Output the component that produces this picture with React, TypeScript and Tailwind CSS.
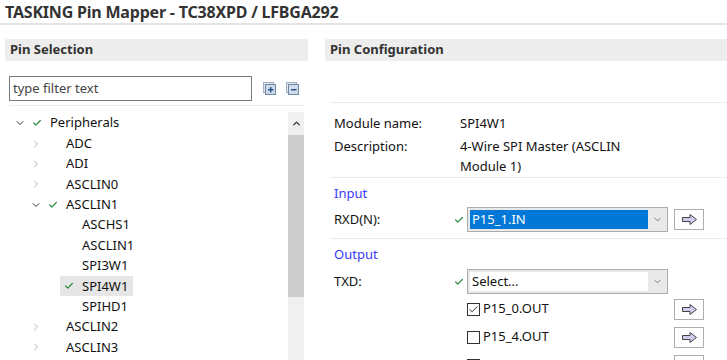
import React from 'react';
import { Check, ChevronDown, ChevronRight, ChevronUp } from 'lucide-react';

interface TreeNode {
    label: string;
    level: number;
    expander?: 'open' | 'closed';
    checked?: boolean;
    selected?: boolean;
}

const tree: TreeNode[] = [
    { label: 'Peripherals', level: 0, expander: 'open', checked: true },
    { label: 'ADC', level: 1, expander: 'closed' },
    { label: 'ADI', level: 1, expander: 'closed' },
    { label: 'ASCLIN0', level: 1, expander: 'closed' },
    { label: 'ASCLIN1', level: 1, expander: 'open', checked: true },
    { label: 'ASCHS1', level: 2 },
    { label: 'ASCLIN1', level: 2 },
    { label: 'SPI3W1', level: 2 },
    { label: 'SPI4W1', level: 2, checked: true, selected: true },
    { label: 'SPIHD1', level: 2 },
    { label: 'ASCLIN2', level: 1, expander: 'closed' },
    { label: 'ASCLIN3', level: 1, expander: 'closed' },
];

// little block arrow used on the "show pin" buttons
const ArrowIcon = () => (
    <svg width="17" height="13" viewBox="0 0 17 13">
        <path d="M1.5 4.5 H9 V1.5 L15.5 6.5 L9 11.5 V8.5 H1.5 Z" fill="#cfcdf0" stroke="#444" strokeWidth="1" strokeLinejoin="round" />
    </svg>
);

const ArrowButton = () => (
    <div className="w-[30px] h-[21px] border border-[#adadad] bg-white flex items-center justify-center">
        <ArrowIcon />
    </div>
);

const TreeToggleIcon = ({ plus }: { plus: boolean }) => (
    <svg width="13" height="13" viewBox="0 0 13 13">
        <rect x="0.5" y="0.5" width="10" height="10" fill="#dfe6ee" stroke="#9fb0c4" />
        <rect x="2.5" y="2.5" width="10" height="10" fill="#cfdbe8" stroke="#6d87a6" />
        <rect x="5" y="7" width="5.5" height="1.4" fill="#22508a" />
        {plus && <rect x="7" y="5" width="1.4" height="5.5" fill="#22508a" />}
    </svg>
);

const GreenCheck = () => <Check size={10} strokeWidth={3} className="text-[#2f8f3f]" />;

const Combo = ({ value, highlighted }: { value: string; highlighted?: boolean }) => (
    <div className="w-[201px] h-[25px] border border-[#adadad] bg-[#e9e9e9] flex">
        <div className={`flex-1 m-[2px] mr-0 flex items-center px-[2px] ${highlighted ? 'bg-[#0078d7] text-white' : 'bg-white text-[#111]'}`}>
            {value}
        </div>
        <div className="w-[19px] flex items-center justify-center">
            <ChevronDown size={11} strokeWidth={1.5} className="text-[#555]" />
        </div>
    </div>
);

const App: React.FC = () => {
    return (
        <div className="w-[727px] h-[360px] overflow-hidden bg-white text-[13px] text-[#111]" style={{ fontFamily: '"Noto Sans", "Open Sans", sans-serif' }}>
            <div className="h-[23px] px-[5px] flex items-center">
                <h1 className="text-[16px] font-bold text-[#333] leading-none tracking-[-0.2px]">TASKING Pin Mapper - TC38XPD / LFBGA292</h1>
            </div>
            <div className="h-[2px] bg-[#e4e4e4]" />

            <div className="flex pt-[14px]">
                {/* left side: pin selection */}
                <section className="w-[303px] ml-[5px]">
                    <div className="h-[22px] bg-[#ededed] rounded-[2px] flex items-center px-[5px] font-bold text-[#333]">Pin Selection</div>
                    <div className="mt-[15px] ml-[4px] flex items-center">
                        <div className="w-[243px] h-[25px] border border-[#7a7a7a] flex items-center px-[3px] text-[#444]">type filter text</div>
                        <div className="ml-[11px]"><TreeToggleIcon plus /></div>
                        <div className="ml-[10px]"><TreeToggleIcon plus={false} /></div>
                    </div>
                    <div className="mt-[4px] ml-[4px] w-[295px] h-px bg-[#ececec]" />
                    <div className="flex mt-[6px]">
                        <div className="flex-1 pt-px">
                            {tree.map((node, i) => (
                                <div key={i} className="h-[20.4px] flex items-center" style={{ paddingLeft: 7 + node.level * 16 }}>
                                    <div className="w-[16px] flex items-center justify-center">
                                        {node.expander === 'open' && <ChevronDown size={12} strokeWidth={2} className="text-[#333]" />}
                                        {node.expander === 'closed' && <ChevronRight size={12} strokeWidth={1.5} className="text-[#999]" />}
                                    </div>
                                    <div className={`flex items-center h-[20px] ${node.selected ? 'bg-[#e6e6e6]' : ''}`}>
                                        <div className="w-[18px] flex items-center justify-center">
                                            {node.checked && <GreenCheck />}
                                        </div>
                                        <span className="pl-[4px] pr-[5px]">{node.label}</span>
                                    </div>
                                </div>
                            ))}
                        </div>
                        <div className="w-[16px] mr-[4px] bg-[#f0f0f0] flex flex-col h-[250px]">
                            <div className="h-[23px] flex items-center justify-center">
                                <ChevronUp size={11} strokeWidth={3} className="text-[#333]" />
                            </div>
                            <div className="h-[162px] bg-[#cdcdcd]" />
                        </div>
                    </div>
                </section>

                {/* right side: pin configuration */}
                <section className="flex-1 ml-[17px]">
                    <div className="h-[22px] bg-[#ededed] rounded-l-[2px] flex items-center px-[5px] font-bold text-[#333]">Pin Configuration</div>
                    <div className="mt-[41px] ml-[5px] h-px bg-[#ececec]" />
                    <div className="pl-[9px] pt-[11px]">
                        <div className="flex h-[20px] items-center">
                            <span className="w-[126px]">Module name:</span>
                            <span>SPI4W1</span>
                        </div>
                        <div className="flex mt-[2px] leading-[20px]">
                            <span className="w-[126px]">Description:</span>
                            <span>4-Wire SPI Master (ASCLIN<br />Module 1)</span>
                        </div>
                    </div>
                    <div className="mt-[1px] ml-[5px] h-px bg-[#ececec]" />
                    <div className="pl-[9px] pt-[6px]">
                        <div className="h-[20px] flex items-center text-[#3a3aff]">Input</div>
                        <div className="flex items-center mt-[3px]">
                            <span className="w-[117px]">RXD(N):</span>
                            <div className="w-[16px] flex items-center justify-center"><GreenCheck /></div>
                            <Combo value="P15_1.IN" highlighted />
                            <div className="ml-[6px]"><ArrowButton /></div>
                        </div>
                    </div>
                    <div className="mt-[6px] ml-[5px] h-px bg-[#ececec]" />
                    <div className="pl-[9px] pt-[6px]">
                        <div className="h-[20px] flex items-center text-[#3a3aff]">Output</div>
                        <div className="flex items-center mt-[4px]">
                            <span className="w-[117px]">TXD:</span>
                            <div className="w-[16px] flex items-center justify-center"><GreenCheck /></div>
                            <Combo value="Select..." />
                        </div>
                        <div className="-mt-[2px]">
                            {[{ pin: 'P15_0.OUT', on: true }, { pin: 'P15_4.OUT', on: false }, { pin: 'AP15_1.OUT', on: false }].map((row) => (
                                <div key={row.pin} className="flex items-center mt-[6px] pl-[133px] h-[22px]">
                                    <div className="w-[207px] flex items-center">
                                        <div className="w-[13px] h-[13px] border border-[#333] bg-white flex items-center justify-center">
                                            {row.on && <Check size={11} strokeWidth={2} className="text-[#222]" />}
                                        </div>
                                        <span className="ml-[3px]">{row.pin}</span>
                                    </div>
                                    <ArrowButton />
                                </div>
                            ))}
                        </div>
                    </div>
                </section>
            </div>
        </div>
    );
};

export default App;
